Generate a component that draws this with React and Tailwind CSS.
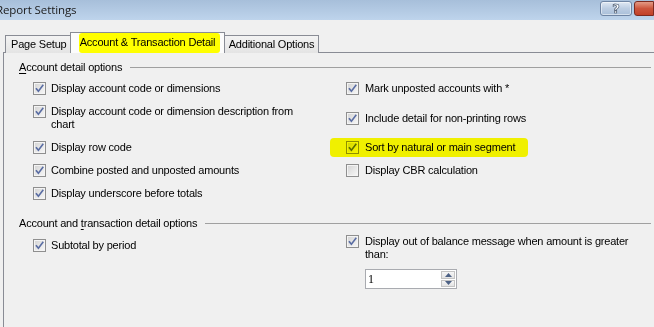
import React from "react";

const F = { fontFamily: '"Liberation Sans", Arial, sans-serif' };

function Box({ checked = true }) {
  return (
    <span className="relative shrink-0 w-[13px] h-[13px] border border-[#8f8f8f] bg-linear-to-br from-[#d2d2d2] via-[#e6e6e6] to-[#f8f8f8] shadow-[inset_0_0_0_1px_#f4f4f4]">
      {checked && (
        <svg className="absolute left-0 top-0" width="11" height="11" viewBox="0 0 11 11">
          <path d="M2.4 5.8 L4.4 8.3 L8.8 2.3" fill="none" stroke="#5a6da3" strokeWidth="1.6" strokeLinecap="square" />
        </svg>
      )}
    </span>
  );
}

function Check({ children, checked = true, textClass = "", gap = "gap-[5px]" }) {
  return (
    <div className={`flex items-start ${gap}`}>
      <Box checked={checked} />
      <span className={`leading-[13px] ${textClass}`}>{children}</span>
    </div>
  );
}

function Header({ children }) {
  return (
    <div className="flex items-center gap-[8px] h-[13px] pr-[3px]">
      <span className="leading-[13px] whitespace-nowrap">{children}</span>
      <span className="flex-1 h-px bg-[#a0a0a0]" />
    </div>
  );
}

export default function App() {
  return (
    <div
      className="w-[654px] h-[327px] overflow-hidden bg-[#f0f0f0] flex flex-col text-[11px] tracking-[-0.2px] text-black"
      style={F}
    >
      {/* Title bar */}
      <div className="h-[20px] shrink-0 flex items-start justify-between bg-linear-to-b from-[#a7bfda] to-[#bed4ec]">
        <span
          className="ml-[-4px] mt-[2px] text-[11.5px] tracking-[-0.1px] leading-[16px] text-[#1b1b1b]"
          style={{ fontFamily: '"Open Sans", "Noto Sans", sans-serif' }}
        >
          Report Settings
        </span>
        <div className="flex items-start mt-px gap-[2px]">
          <div className="w-[32px] h-[15px] rounded-[3px] border border-[#6e84a3] bg-linear-to-b from-[#dfe8f3] via-[#bccde2] to-[#a9bfd9] flex items-center justify-center shadow-[inset_0_0_0_1px_rgba(255,255,255,0.5)]">
            <span
              className="text-[13px] font-bold leading-[13px] text-white"
              style={{ fontFamily: '"DejaVu Sans", sans-serif', WebkitTextStroke: "0.6px #3a4a60" }}
            >
              ?
            </span>
          </div>
          <div className="w-[20px] h-[15px] rounded-l-[3px] border border-[#7c2a20] bg-linear-to-b from-[#e39a86] via-[#cc553d] to-[#c24028]" />
        </div>
      </div>

      {/* Tabs */}
      <div className="mt-[12px] flex items-end pl-[5px] h-[20px] shrink-0 relative z-10">
        <div className="h-[18px] w-[66px] border border-b-0 border-[#898c95] bg-linear-to-b from-[#f3f3f3] to-[#e4e4e4] flex items-center pl-[5px] mb-[-1px]">
          <span className="leading-[13px]">Page Setup</span>
        </div>
        <div className="relative h-[21px] w-[155px] -ml-px border border-b-0 border-[#898c95] bg-[#fcfcfc] flex items-center justify-center mb-[-1px] z-10">
          <span className="absolute left-[8px] top-[0px] w-[141px] h-[20px] rounded-[3px] bg-[#ffff00]" />
          <span className="relative leading-[13px] mt-[-1px]">Account &amp; Transaction Detail</span>
        </div>
        <div className="h-[18px] w-[95px] -ml-px border border-b-0 border-[#898c95] bg-linear-to-b from-[#f3f3f3] to-[#e4e4e4] flex items-center justify-center mb-[-1px]">
          <span className="leading-[13px]">Additional Options</span>
        </div>
      </div>

      {/* Panel */}
      <div className="flex-1 ml-[3px] border-l border-t border-[#898c95] pt-[8px] pl-[15px]">
        <Header>
          <span className="underline underline-offset-[2px]">A</span>ccount detail options
        </Header>

        <div className="mt-[8px] ml-[14px] grid grid-cols-[313px_1fr] gap-y-[10px] items-center">
          <Check>Display account code or dimensions</Check>
          <Check gap="gap-[6px]">Mark unposted accounts with *</Check>

          <Check textClass="w-[262px]">Display account code or dimension description from chart</Check>
          <Check gap="gap-[6px]">Include detail for non-printing rows</Check>

          <Check>Display row code</Check>
          <div className="relative">
            <span className="absolute left-[-16px] top-[-3px] w-[198px] h-[19px] rounded-[4px] bg-[#ffff00] mix-blend-multiply z-10" />
            <Check gap="gap-[6px]">Sort by natural or main segment</Check>
          </div>

          <Check>Combine posted and unposted amounts</Check>
          <Check gap="gap-[6px]" checked={false}>Display CBR calculation</Check>

          <Check>Display underscore before totals</Check>
          <div />
        </div>

        <div className="mt-[17px]">
          <Header>
            Account and <span className="underline underline-offset-[2px]">t</span>ransaction detail options
          </Header>
        </div>

        <div className="mt-[5px] ml-[14px] grid grid-cols-[313px_1fr] items-start">
          <div className="pt-[4px]">
            <Check>Subtotal by period</Check>
          </div>
          <div>
            <Check gap="gap-[6px]" textClass="w-[276px]">
              Display out of balance message when amount is greater than:
            </Check>
            <div className="mt-[8px] ml-[19px] w-[92px] h-[20px] border border-[#a9abb0] bg-white flex items-center pl-[2px] pr-[1px]">
              <span className="flex-1 text-[12px] leading-[14px]" style={{ fontFamily: '"Liberation Serif", serif' }}>1</span>
              <div className="w-[14px] h-[16px] flex flex-col gap-px">
                <div className="flex-1 border border-[#c3c3c3] bg-linear-to-b from-[#f6f6f6] to-[#e3e3e3] flex items-center justify-center">
                  <svg width="7" height="4" viewBox="0 0 7 4"><path d="M0 4 L3.5 0 L7 4 Z" fill="#4d6185" /></svg>
                </div>
                <div className="flex-1 border border-[#c3c3c3] bg-linear-to-b from-[#f6f6f6] to-[#e3e3e3] flex items-center justify-center">
                  <svg width="7" height="4" viewBox="0 0 7 4"><path d="M0 0 L3.5 4 L7 0 Z" fill="#4d6185" /></svg>
                </div>
              </div>
            </div>
          </div>
        </div>
      </div>
    </div>
  );
}
